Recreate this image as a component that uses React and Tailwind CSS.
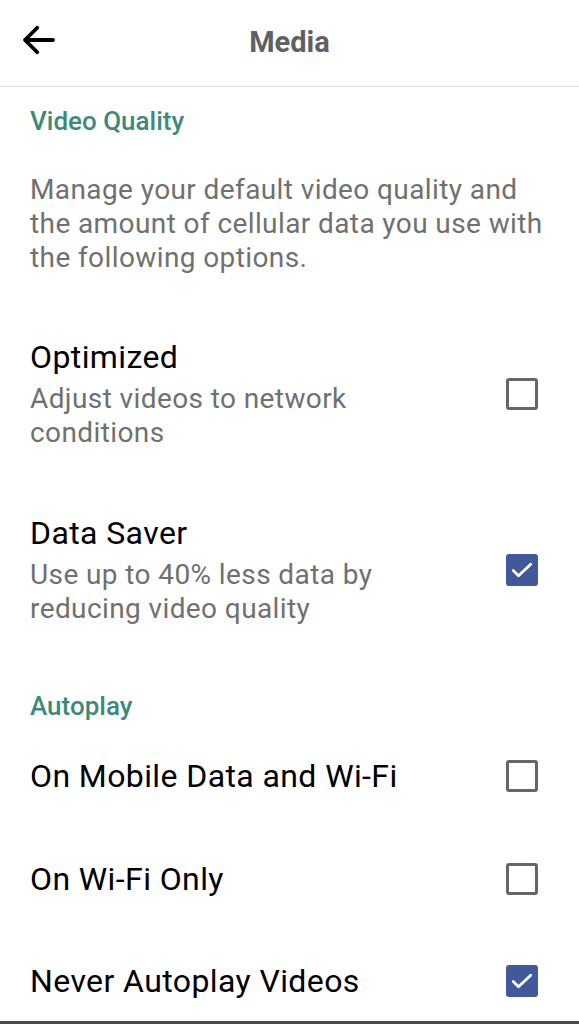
import React from "react";

const Checkbox = ({ checked }) =>
  checked ? (
    <div className="w-8 h-8 rounded-[3px] bg-[#41599b] flex items-center justify-center shrink-0">
      <svg viewBox="0 0 24 24" className="w-7 h-7" fill="none" stroke="white" strokeWidth="2.4" strokeLinecap="round" strokeLinejoin="round">
        <path d="M4.5 12.5l4.5 4.5L19.5 7" />
      </svg>
    </div>
  ) : (
    <div className="w-8 h-8 rounded-[3px] border-[3px] border-[#666666] shrink-0" />
  );

const Option = ({ title, sub, checked, className }) => (
  <div className={`flex items-center justify-between pl-[30px] pr-[41px] ${className}`}>
    <div>
      <p className="text-[32px] leading-[38px] tracking-[0.4px] text-black">{title}</p>
      {sub && (
        <p className="mt-[6px] text-[28px] leading-[34px] tracking-[0.4px] text-[#707070]">
          {sub[0]}
          <br />
          {sub[1]}
        </p>
      )}
    </div>
    <Checkbox checked={checked} />
  </div>
);

export default function App() {
  return (
    <div className="w-[579px] h-[1024px] bg-white relative overflow-hidden" style={{ fontFamily: "Roboto, sans-serif" }}>
      {/* Header */}
      <div className="h-[87px] border-b border-[#e3e3e3] flex items-center relative">
        <svg viewBox="0 0 24 24" className="absolute left-[18px] top-[19px] w-[42px] h-[42px]" fill="none" stroke="black" strokeWidth="2.2" strokeLinecap="round" strokeLinejoin="round">
          <path d="M20 12H4.5M11 5l-7 7 7 7" />
        </svg>
        <h1 className="w-full text-center text-[29px] font-bold text-[#5f6064]">Media</h1>
      </div>

      {/* Video Quality */}
      <h2 className="pt-[17px] pl-[30px] text-[26px] leading-[34px] font-medium text-[#3e8a78]">Video Quality</h2>
      <p className="mt-[35px] pl-[30px] pr-[10px] text-[28px] leading-[34px] tracking-[0.4px] text-[#707070]">
        Manage your default video quality and
        <br />
        the amount of cellular data you use with
        <br />
        the following options.
      </p>

      <Option className="mt-[63px]" title="Optimized" sub={["Adjust videos to network", "conditions"]} checked={false} />
      <Option className="mt-[64px]" title="Data Saver" sub={["Use up to 40% less data by", "reducing video quality"]} checked={true} />

      {/* Autoplay */}
      <h2 className="mt-[63px] pl-[30px] text-[26px] leading-[34px] font-medium text-[#3e8a78]">Autoplay</h2>
      <Option className="mt-[34px]" title="On Mobile Data and Wi-Fi" checked={false} />
      <Option className="mt-[65px]" title="On Wi-Fi Only" checked={false} />
      <Option className="mt-[64px]" title="Never Autoplay Videos" checked={true} />

      <div className="absolute bottom-0 left-0 right-0 h-[3px] bg-[#4a4a4a]" />
    </div>
  );
}
